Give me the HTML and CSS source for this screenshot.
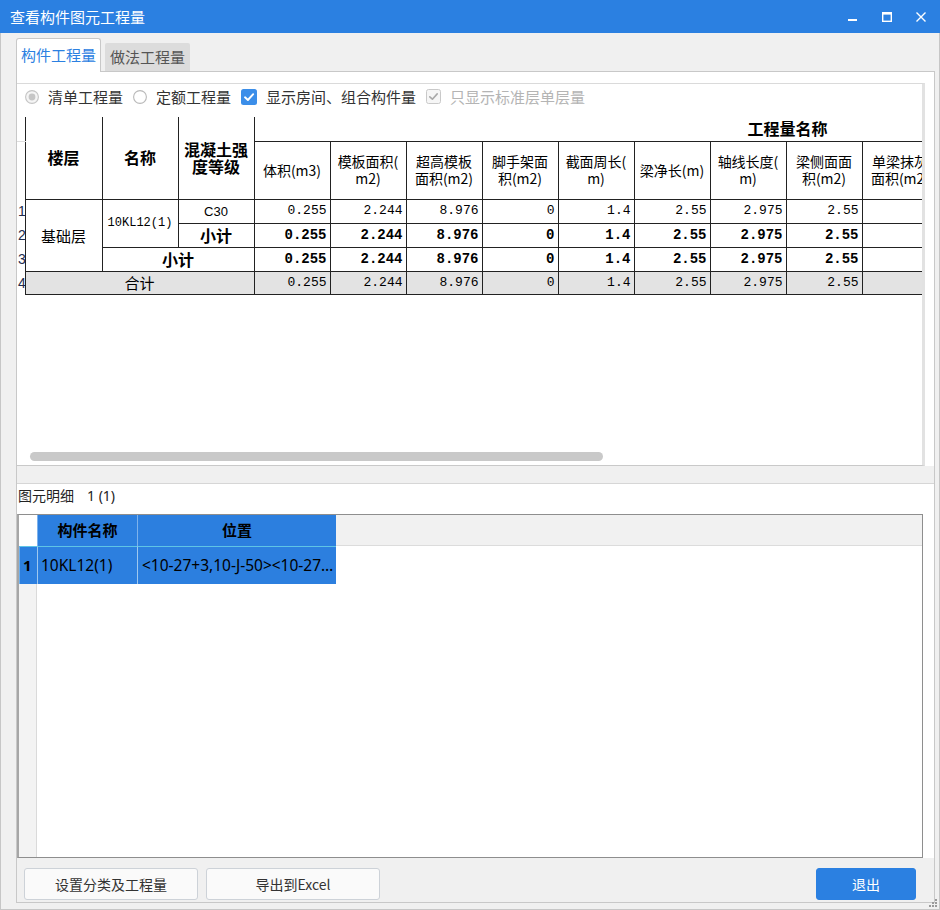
FILE: index.html
```html
<!DOCTYPE html>
<html lang="zh-CN">
<head>
<meta charset="utf-8">
<title>查看构件图元工程量</title>
<link rel="stylesheet" href="styles.css">
</head>
<body>
<div class="window">
  <header class="titlebar">
    <span class="title">查看构件图元工程量</span>
    <div class="win-ctrls">
      <span class="wc"><svg width="12" height="12" viewBox="0 0 12 12"><rect x="1" y="8" width="9" height="2" fill="#fff"/></svg></span>
      <span class="wc"><svg width="12" height="12" viewBox="0 0 12 12"><rect x="1.7" y="1.7" width="8.6" height="8.6" fill="none" stroke="#fff" stroke-width="1.4"/><rect x="1" y="1" width="10" height="2.6" fill="#fff"/></svg></span>
      <span class="wc"><svg width="12" height="12" viewBox="0 0 12 12"><path d="M1.5 1.5 L10.5 10.5 M10.5 1.5 L1.5 10.5" stroke="#fff" stroke-width="1.4" fill="none"/></svg></span>
    </div>
  </header>

  <div class="frame">
    <nav class="tabs">
      <div class="tab active">构件工程量</div>
      <div class="tab">做法工程量</div>
    </nav>

    <div class="pane">
      <section class="upper">
        <div class="options">
          <label class="opt">
            <svg class="ico" width="14" height="14" viewBox="0 0 14 14"><circle cx="7" cy="7" r="6.4" fill="#f5f5f5" stroke="#c4c4c4" stroke-width="1.1"/><circle cx="7" cy="7" r="3.4" fill="#c6c6c6"/></svg>
            <span>清单工程量</span>
          </label>
          <label class="opt">
            <svg class="ico" width="14" height="14" viewBox="0 0 14 14"><circle cx="7" cy="7" r="6.4" fill="#fff" stroke="#b9b9b9" stroke-width="1.1"/></svg>
            <span>定额工程量</span>
          </label>
          <label class="opt">
            <svg class="ico" width="16" height="16" viewBox="0 0 16 16"><rect x="0" y="0" width="16" height="16" rx="2.5" fill="#3b8ee9"/><path d="M4 8.3 L6.9 11 L12.2 5.2" stroke="#fff" stroke-width="1.9" fill="none" stroke-linecap="round" stroke-linejoin="round"/></svg>
            <span>显示房间、组合构件量</span>
          </label>
          <label class="opt disabled">
            <svg class="ico" width="15" height="15" viewBox="0 0 15 15"><rect x="0.5" y="0.5" width="14" height="14" rx="2" fill="#f6f6f6" stroke="#c9c9c9"/><path d="M3.8 7.8 L6.4 10.2 L11.2 4.9" stroke="#a9a9a9" stroke-width="1.6" fill="none" stroke-linecap="round" stroke-linejoin="round"/></svg>
            <span>只显示标准层单层量</span>
          </label>
        </div>

        <div class="grid">
          <div class="grid-scroll">
            <table class="qty">
              <colgroup>
                <col class="w-rh"><col class="w-f"><col class="w-b"><col class="w-a">
                <col class="w-n"><col class="w-n"><col class="w-n"><col class="w-n"><col class="w-n"><col class="w-n"><col class="w-n">
                <col class="w-n"><col class="w-n"><col class="w-n"><col class="w-n"><col class="w-n"><col class="w-n"><col class="w-n">
              </colgroup>
              <thead>
                <tr class="r1">
                  <th class="rh top"></th>
                  <th class="hb" rowspan="2">楼层</th>
                  <th class="hb" rowspan="2">名称</th>
                  <th class="hb" rowspan="2">混凝土强<br>度等级</th>
                  <th class="hb grp" colspan="14">工程量名称</th>
                </tr>
                <tr class="r2">
                  <th class="rh"></th>
                  <th>体积(m3)</th>
                  <th>模板面积(<br>m2)</th>
                  <th>超高模板<br>面积(m2)</th>
                  <th>脚手架面<br>积(m2)</th>
                  <th>截面周长(<br>m)</th>
                  <th>梁净长(m)</th>
                  <th>轴线长度(<br>m)</th>
                  <th>梁侧面面<br>积(m2)</th>
                  <th>单梁抹灰<br>面积(m2)</th>
                  <th>梁抹灰面<br>积(m2)</th>
                  <th>梁底面模<br>板面积(m2)</th>
                  <th>梁侧面抹<br>灰面积(m2)</th>
                  <th>梁底面抹<br>灰面积(m2)</th>
                  <th>梁脚手架<br>长度(m)</th>
                </tr>
              </thead>
              <tbody>
                <tr>
                  <td class="rh">1</td>
                  <td class="c lbl" rowspan="3">基础层</td>
                  <td class="c name" rowspan="2">10KL12(1)</td>
                  <td class="c grade">C30</td>
                  <td class="n">0.255</td><td class="n">2.244</td><td class="n">8.976</td><td class="n">0</td><td class="n">1.4</td><td class="n">2.55</td><td class="n">2.975</td><td class="n">2.55</td>
                  <td></td><td></td><td></td><td></td><td></td><td></td>
                </tr>
                <tr class="bold">
                  <td class="rh">2</td>
                  <td class="c sub">小计</td>
                  <td class="n">0.255</td><td class="n">2.244</td><td class="n">8.976</td><td class="n">0</td><td class="n">1.4</td><td class="n">2.55</td><td class="n">2.975</td><td class="n">2.55</td>
                  <td></td><td></td><td></td><td></td><td></td><td></td>
                </tr>
                <tr class="bold">
                  <td class="rh">3</td>
                  <td class="c sub" colspan="2">小计</td>
                  <td class="n">0.255</td><td class="n">2.244</td><td class="n">8.976</td><td class="n">0</td><td class="n">1.4</td><td class="n">2.55</td><td class="n">2.975</td><td class="n">2.55</td>
                  <td></td><td></td><td></td><td></td><td></td><td></td>
                </tr>
                <tr class="total">
                  <td class="rh">4</td>
                  <td class="c lbl" colspan="3">合计</td>
                  <td class="n">0.255</td><td class="n">2.244</td><td class="n">8.976</td><td class="n">0</td><td class="n">1.4</td><td class="n">2.55</td><td class="n">2.975</td><td class="n">2.55</td>
                  <td></td><td></td><td></td><td></td><td></td><td></td>
                </tr>
              </tbody>
            </table>
          </div>
          <div class="hscroll"><div class="thumb"></div></div>
        </div>
      </section>

      <div class="splitter"></div>

      <section class="lower">
        <div class="lower-title"><span>图元明细</span><span class="count">1 (1)</span></div>
        <div class="lgrid">
          <div class="lc lrh-head"></div>
          <div class="lc lh">构件名称</div>
          <div class="lc lh">位置</div>
          <div class="lc lh-fill"></div>
          <div class="lc sel lrh">1</div>
          <div class="lc sel">10KL12(1)</div>
          <div class="lc sel pos">&lt;10-27+3,10-J-50&gt;&lt;10-27+3,10-J-51&gt;</div>
          <div class="lc row-fill"></div>
          <div class="lc lrh-fill"></div>
          <div class="lc body-fill"></div>
        </div>
      </section>

      <footer class="actions">
        <button class="btn wide">设置分类及工程量</button>
        <button class="btn wide">导出到Excel</button>
        <span class="spacer"></span>
        <button class="btn primary">退出</button>
      </footer>
    </div>
  </div>

  <svg class="grip" width="9" height="9" viewBox="0 0 9 9"><rect x="7" y="1" width="2" height="2" fill="#9a9a9a"/><rect x="4" y="4" width="2" height="2" fill="#9a9a9a"/><rect x="7" y="4" width="2" height="2" fill="#9a9a9a"/><rect x="1" y="7" width="2" height="2" fill="#9a9a9a"/><rect x="4" y="7" width="2" height="2" fill="#9a9a9a"/><rect x="7" y="7" width="2" height="2" fill="#9a9a9a"/></svg>
</div>
</body>
</html>
```

FILE: styles.css
```css
* { box-sizing: border-box; }
html, body { margin: 0; padding: 0; }
body {
  width: 940px;
  height: 910px;
  overflow: hidden;
  background: #f0f0f0;
  font-family: "Noto Sans CJK SC", "Noto Sans", sans-serif;
  color: #222;
}

.window {
  position: relative;
  width: 940px;
  height: 910px;
}

/* title bar */
.titlebar {
  height: 33px;
  background: #2b80e1;
  display: flex;
  align-items: center;
  padding-left: 10px;
  padding-right: 2px;
  color: #fff;
  font-size: 15px;
}
.title { flex: 1; line-height: 33px; }
.win-ctrls { display: flex; }
.wc {
  width: 34px;
  height: 33px;
  display: flex;
  align-items: center;
  justify-content: center;
}

/* frame */
.frame {
  height: 877px;
  border-left: 1px solid #c6c6c6;
  border-right: 1px solid #c6c6c6;
  border-bottom: 1px solid #c6c6c6;
  padding: 5px 4px 0 15px;
}

.tabs {
  display: flex;
  align-items: flex-end;
  gap: 4px;
  height: 33px;
}
.tab {
  width: 85px;
  height: 28px;
  background: #dcdcdc;
  color: #555;
  font-size: 15px;
  line-height: 28px;
  text-align: center;
  border-radius: 2px 2px 0 0;
}
.tab.active {
  position: relative;
  z-index: 1;
  height: 34px;
  margin-bottom: -1px;
  background: #fff;
  color: #2b80e1;
  border: 1px solid #c8c8c8;
  border-bottom: none;
  border-radius: 3px 3px 0 0;
  line-height: 31px;
}

.pane {
  height: 832px;
  border: 1px solid #c8c8c8;
  background: #fff;
  display: flex;
  flex-direction: column;
}

/* upper panel */
.upper {
  margin-top: 11px;
  margin-right: 9px;
  height: 383px;
  border-top: 1px solid #dadada;
  border-right: 3px solid #e2e2e2;
  border-bottom: 1px solid #c9c9c9;
  display: flex;
  flex-direction: column;
}
.options {
  height: 25px;
  display: flex;
  align-items: center;
  padding-left: 8px;
  font-size: 15px;
  color: #333;
}
.opt {
  display: flex;
  align-items: center;
  gap: 9px;
  margin-right: 10px;
  line-height: 20px;
}
.opt.disabled { color: #b4b4b4; }
.ico { flex: none; display: block; }

.grid {
  flex: 1;
  display: flex;
  flex-direction: column;
  padding-top: 8px;
  min-height: 0;
}
.grid-scroll {
  flex: 1;
  overflow: hidden;
}
.hscroll {
  height: 9px;
  margin: 0 0 4px 13px;
}
.thumb {
  width: 573px;
  height: 9px;
  border-radius: 5px;
  background: #c9c9c9;
}

/* quantity table */
.qty {
  border-collapse: collapse;
  table-layout: fixed;
  width: 1300px;
  font-family: "Liberation Mono", "Noto Sans CJK SC", monospace;
  color: #000;
}
.w-rh { width: 8px; }
.w-f { width: 77px; }
.w-a { width: 76px; }
.w-b { width: 76px; }
.w-n { width: 76px; }

.qty th, .qty td {
  border: 1px solid #222;
  padding: 0 3px;
  overflow: hidden;
  white-space: nowrap;
}
.qty thead th {
  border-top: none;
  font-family: "Noto Sans CJK SC", sans-serif;
  font-weight: normal;
  font-size: 14px;
  line-height: 17px;
  text-align: center;
  vertical-align: middle;
}
.qty thead th.hb {
  font-weight: bold;
  font-size: 16px;
}
.qty .r1 th { height: 24px; }
.qty .r2 th { height: 58px; }
.qty thead th.grp {
  text-align: left;
  padding-left: 493px;
  border-right: none;
}

.qty .rh {
  border: none;
  border-right: 1px solid #222;
  padding: 0 0 0 1px;
  text-align: left;
  background: #fff;
  font-family: "Liberation Sans", sans-serif;
  font-size: 14px;
  font-weight: normal;
  color: #1d2b4c;
}
.qty thead th.rh.top { border-bottom: 1px solid #dedede; }

.qty tbody td { height: 24px; vertical-align: middle; }
.qty tbody tr:last-child td { height: 23px; }
.qty td.c { text-align: center; }
.qty td.lbl {
  font-family: "Noto Sans CJK SC", sans-serif;
  font-size: 15px;
}
.qty td.name {
  font-size: 12px;
  padding: 0 2px;
}
.qty td.grade {
  font-family: "Liberation Sans", sans-serif;
  font-size: 13px;
}
.qty td.sub {
  font-family: "Noto Sans CJK SC", sans-serif;
  font-weight: bold;
  font-size: 16px;
  line-height: 20px;
}
.qty td.n {
  text-align: right;
  font-size: 13px;
  line-height: 18px;
}
.qty tr.bold td.n {
  font-weight: bold;
  font-size: 14px;
}
.qty tr.total td { background: #e3e3e3; }
.qty tr.total td.rh { background: #fff; }

/* splitter */
.splitter {
  height: 18px;
  background: #f0f0f0;
  border-bottom: 1px solid #d6d6d6;
}

/* lower panel */
.lower {
  height: 374px;
  display: flex;
  flex-direction: column;
}
.lower-title {
  height: 30px;
  padding: 1px 0 0 1px;
  font-size: 14px;
  line-height: 20px;
  color: #222;
}
.lower-title .count {
  margin-left: 13px;
  font-family: "Noto Sans", sans-serif;
  font-size: 14px;
}
.lgrid {
  width: 906px;
  height: 344px;
  border: 1px solid #8e8e8e;
  border-left: 2px solid #a6a6a6;
  display: grid;
  grid-template-columns: 18px 100px 199px 1fr;
  grid-template-rows: 31px 38px 1fr;
  font-size: 15px;
  color: #000;
}
.lc { min-width: 0; }
.lrh-head { background: #fff; }
.lh {
  background: #2c7fdf;
  font-weight: bold;
  text-align: center;
  line-height: 30px;
  border-left: 1px solid #7db2ec;
}
.lh-fill {
  background: #f1f1f1;
  border-bottom: 1px solid #dcdcdc;
}
.sel {
  background: #2c7fdf;
  border-top: 1px solid #5ec4e6;
  border-left: 1px solid #9fc8ef;
  line-height: 36px;
  padding-left: 3px;
  white-space: nowrap;
  overflow: hidden;
  text-overflow: ellipsis;
  font-family: "Noto Sans", "Noto Sans CJK SC", sans-serif;
  font-size: 15.5px;
}
.sel.lrh {
  border-left: 1px solid #6fb0ec;
  padding-left: 3px;
  font-weight: bold;
  font-size: 15px;
}
.sel.pos { padding-left: 4px; }
.row-fill { background: #fff; }
.lrh-fill {
  background: #f3f3f3;
  border-right: 1px solid #dadada;
}
.body-fill {
  grid-column: span 3;
  background: #fff;
}

/* footer */
.actions {
  height: 44px;
  background: #f0f0f0;
  display: flex;
  align-items: flex-start;
  gap: 8px;
  padding: 10px 18px 2px 7px;
}
.spacer { flex: 1; }
.btn {
  height: 32px;
  border: 1px solid #cdd2d8;
  border-radius: 3px;
  background: #fafafa;
  color: #333;
  font-family: "Noto Sans CJK SC", sans-serif;
  font-size: 14px;
  padding: 0;
}
.btn.wide { width: 174px; }
.btn.primary {
  width: 100px;
  background: #2b80e1;
  border-color: #2b80e1;
  color: #fff;
}

.grip {
  position: absolute;
  right: 3px;
  bottom: 3px;
}
```
